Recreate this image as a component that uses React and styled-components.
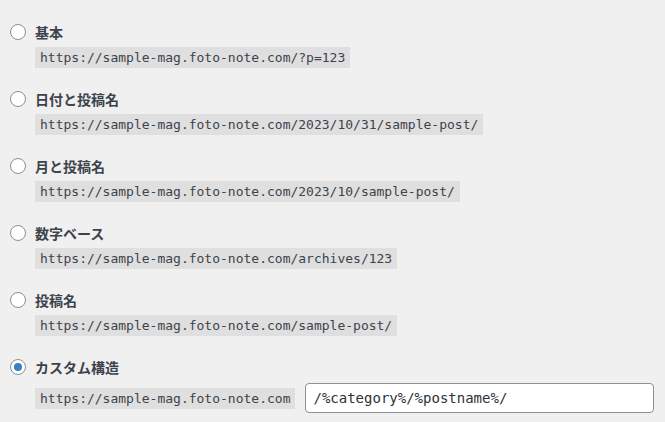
import React from "react";
import styled, { createGlobalStyle } from "styled-components";

const GlobalStyle = createGlobalStyle`
    body {
        margin: 0;
        background: #f0f0f1;
        font-family: "Noto Sans CJK JP", "Noto Sans", sans-serif;
        color: #3c434a;
    }
`;

const Fieldset = styled.div`
    display: flex;
    flex-direction: column;
    gap: 23px;
    padding: 24px 0 0 10px;
`;

const Option = styled.div`
    display: flex;
    flex-direction: column;
    gap: ${props => props.custom ? "8px" : "7px"};
`;

const Label = styled.label`
    display: flex;
    align-items: center;
    gap: 9px;
    height: 16px;
    font-size: 14px;
    font-weight: 700;
    color: #3c434a;
    cursor: pointer;
`;

const Radio = styled.span`
    box-sizing: border-box;
    width: 16px;
    height: 16px;
    border-radius: 50%;
    border: 1px solid #8c8f94;
    background: #fff;
    display: flex;
    align-items: center;
    justify-content: center;
    flex-shrink: 0;
    &::before {
        content: "";
        display: ${props => props.checked ? "block" : "none"};
        width: 8px;
        height: 8px;
        border-radius: 50%;
        background: #3582c4;
    }
`;

const Code = styled.code`
    align-self: ${props => props.inline ? "center" : "flex-start"};
    margin-left: ${props => props.inline ? "0" : "25px"};
    padding: 3px 5px 2px;
    line-height: 16px;
    font-family: "DejaVu Sans Mono", "Liberation Mono", monospace;
    font-size: 13px;
    color: #3c434a;
    background: rgba(0, 0, 0, 0.07);
    white-space: nowrap;
`;

const CustomRow = styled.div`
    display: flex;
    align-items: center;
    gap: 10px;
    margin-left: 25px;
`;

const Input = styled.input`
    box-sizing: border-box;
    width: 349px;
    height: 30px;
    padding: 0 7px;
    border: 1px solid #8c8f94;
    border-radius: 4px;
    background: #fff;
    font-family: "DejaVu Sans Mono", "Liberation Mono", monospace;
    font-size: 14px;
    color: #2c3338;
    outline: none;
`;

const base = "https://sample-mag.foto-note.com";

const options = [
    { label: "基本", code: `${base}/?p=123` },
    { label: "日付と投稿名", code: `${base}/2023/10/31/sample-post/` },
    { label: "月と投稿名", code: `${base}/2023/10/sample-post/` },
    { label: "数字ベース", code: `${base}/archives/123` },
    { label: "投稿名", code: `${base}/sample-post/` },
];

const App = () => (
    <>
        <GlobalStyle />
        <Fieldset>
            {options.map(x => (
                <Option key={x.label}>
                    <Label>
                        <Radio />
                        {x.label}
                    </Label>
                    <Code>{x.code}</Code>
                </Option>
            ))}
            <Option custom>
                <Label>
                    <Radio checked />
                    カスタム構造
                </Label>
                <CustomRow>
                    <Code inline>{base}</Code>
                    <Input defaultValue="/%category%/%postname%/" />
                </CustomRow>
            </Option>
        </Fieldset>
    </>
);

export default App;
